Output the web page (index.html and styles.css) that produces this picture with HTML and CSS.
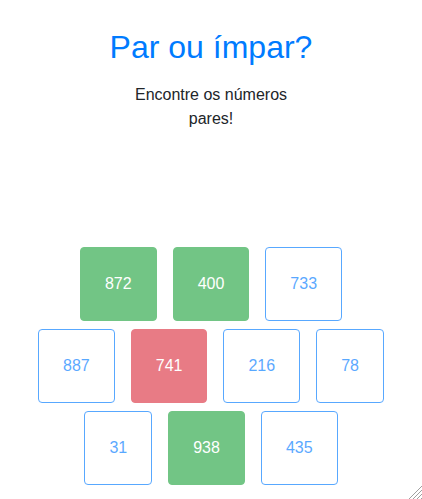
FILE: index.html
```html
<!DOCTYPE html>
<html lang="pt">
<head>
  <meta charset="UTF-8">
  <title>Par ou ímpar?</title>
  <link rel="stylesheet" href="styles.css">
</head>
<body>
  <div class="app">
    <h2 class="titulo">Par ou ímpar?</h2>
    <p class="instrucao">Encontre os números pares!</p>
    <div class="numeros">
      <button class="num num-certo" disabled>872</button>
      <button class="num num-certo" disabled>400</button>
      <button class="num" disabled>733</button>
      <button class="num" disabled>887</button>
      <button class="num num-errado" disabled>741</button>
      <button class="num" disabled>216</button>
      <button class="num" disabled>78</button>
      <button class="num" disabled>31</button>
      <button class="num num-certo" disabled>938</button>
      <button class="num" disabled>435</button>
    </div>
  </div>
</body>
</html>
```

FILE: styles.css
```css
* {
  box-sizing: border-box;
}

html,
body {
  margin: 0;
}

body {
  font-family: "Liberation Sans", Arial, sans-serif;
  font-size: 16px;
  line-height: 1.5;
  color: #212529;
  background: #fff;
}

.app {
  position: relative;
  height: 100vh;
  overflow: hidden;
  text-align: center;
  padding-top: 28px;
}

/* alça de redimensionar no canto */
.app::after {
  content: "";
  position: absolute;
  right: 0;
  bottom: 0;
  width: 14px;
  height: 14px;
  background: repeating-linear-gradient(135deg, transparent 0 1.6px, #a0a0a0 1.6px 2.8px);
  clip-path: polygon(100% 0, 100% 100%, 0 100%);
}

.titulo {
  margin: 0;
  font-size: 32px;
  font-weight: 400;
  line-height: 1.2;
  color: #007bff;
}

.instrucao {
  max-width: 170px;
  margin: 17px auto 0;
}

.numeros {
  width: 350px;
  margin: 116px auto 0;
  display: flex;
  flex-wrap: wrap;
  justify-content: center;
  gap: 8px 16px;
}

.num {
  font: inherit;
  line-height: 24px;
  padding: 24px;
  border: 1px solid #007bff;
  border-radius: 4px;
  background: transparent;
  color: #007bff;
  opacity: .65;
}

.num-certo {
  background: #28a745;
  border-color: #28a745;
  color: #fff;
}

.num-errado {
  background: #dc3545;
  border-color: #dc3545;
  color: #fff;
}
```
